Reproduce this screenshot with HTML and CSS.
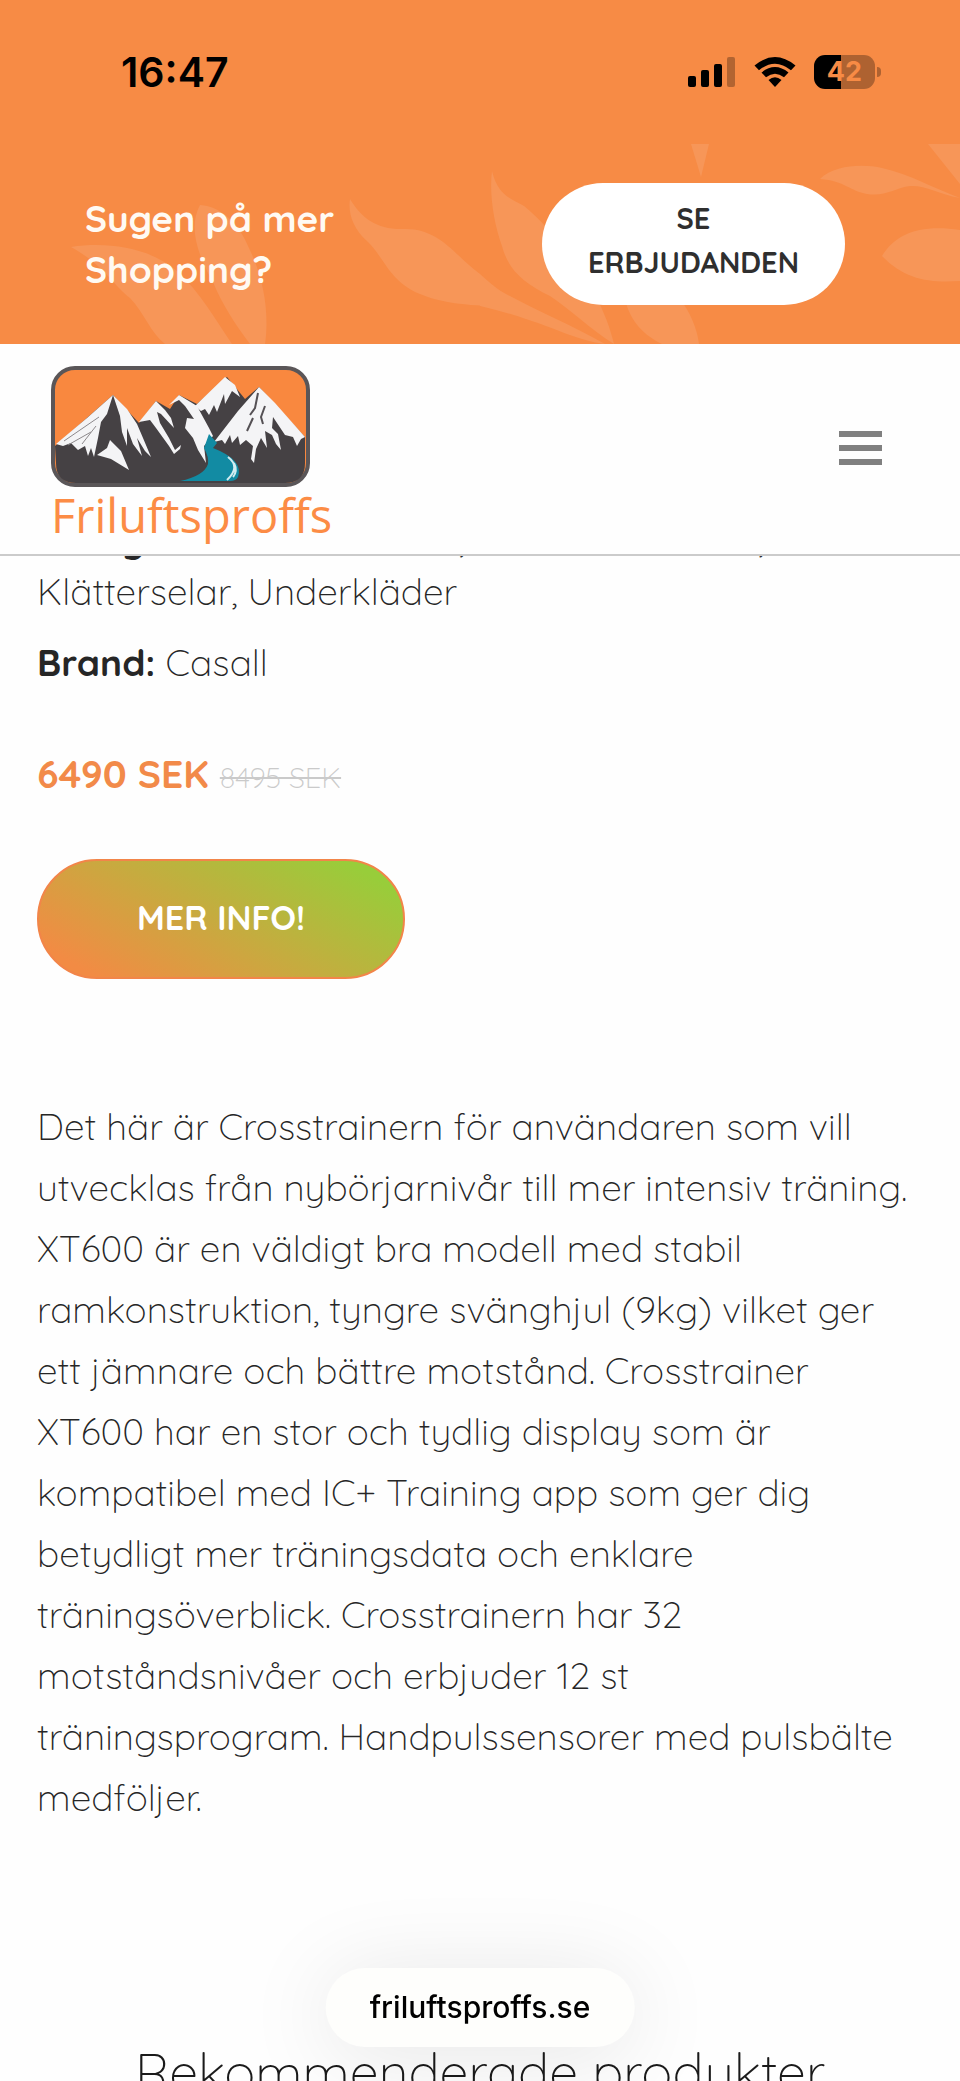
FILE: index.html
```html
<!DOCTYPE html>
<html lang="sv">
<head>
<meta charset="utf-8">
<meta name="viewport" content="width=device-width, initial-scale=1">
<title>Friluftsproffs</title>
<link rel="stylesheet" href="styles.css">
</head>
<body>
<div class="screen">
  <header class="top">
    <div class="status">
      <span class="clock">16:47</span>
      <div class="indicators">
        <svg class="signal" width="48" height="32" viewBox="0 0 48 32" aria-hidden="true">
          <rect x="0" y="20" width="8" height="11" rx="2"/>
          <rect x="13" y="14" width="8" height="17" rx="2"/>
          <rect x="26" y="8" width="8" height="23" rx="2"/>
          <rect x="39" y="1" width="8" height="30" rx="2" opacity=".28"/>
        </svg>
        <svg class="wifi" width="42" height="32" viewBox="0 0 42 32" aria-hidden="true">
          <path d="M0.500 9.500Q21 -7.500 41.500 9.500L37 14.300Q21 1 5 14.300Z"/>
          <path d="M7.500 16.500Q21 5.500 34.500 16.500L30 21.300Q21 14 12 21.300Z"/>
          <path d="M14.500 24Q21 18.500 27.500 24L21 31Z"/>
        </svg>
        <div class="battery"><span class="level">42</span></div>
      </div>
    </div>
    <div class="promo">
      <svg class="leaves" viewBox="0 0 960 200" preserveAspectRatio="none" aria-hidden="true">
        <path d="M71 103C110 97 152 105 177 127C200 148 215 175 232 200H165C150 188 145 170 130 154C112 140 105 122 71 103Z"/>
        <path d="M200 61C222 62 240 82 248 102C262 130 270 165 265 200H250C235 180 222 160 213 138C200 115 187 85 200 61Z"/>
        <path d="M350 55C362 75 378 86 404 85C440 84 455 112 480 130C500 148 515 158 530 166C500 160 455 165 420 150C390 138 385 115 368 98C352 84 348 68 350 55Z"/>
        <path d="M492 27C498 52 512 55 524 62C552 85 600 140 614 200C590 185 570 165 550 152C522 138 508 125 502 102C494 80 489 50 492 27Z"/>
        <path d="M480 135C520 160 560 175 605 200C570 196 548 178 480 162Z"/>
        <path d="M625 155H680C690 168 697 184 699 200H662C645 192 630 178 625 155Z"/>
        <path d="M691 0H709L701 33Z"/>
        <path d="M820 35C835 20 865 20 882 24C910 30 935 45 960 54C938 50 925 41 910 42C895 44 885 53 867 50C850 47 845 37 820 35Z"/>
        <path d="M928 0H960V40Z"/>
        <path d="M882 112C895 90 920 80 960 86V137C930 139 905 136 882 112Z"/>
      </svg>
      <p class="promo-text">Sugen på mer<br>Shopping?</p>
      <a class="promo-link" href="#">SE<br>ERBJUDANDEN</a>
    </div>
    <nav class="navbar">
      <a class="logo" href="#">
        <svg width="259" height="121" viewBox="0 0 259 121" aria-hidden="true">
          <rect x="2" y="2" width="255" height="117" rx="22" fill="#f9883f" stroke="#5a5658" stroke-width="4"/>
          <path d="M4 80L62 29L88 57L105 35L119 43L128 29L146 38L176 11L194 33L208 21L254 71V97Q254 117 234 117H25Q5 117 5 97Z" fill="#454144"/>
          <path d="M5 78L36 52L62 29L56 48L50 56L47 72L43 91L40 82L37 90L34 80L27 84L20 77L12 80Z" fill="#f4f4f6"/>
          <path d="M62 29L76 43L86 58L92 72L100 91L94 85L86 72L91 90L82 78L76 62L76 80L71 66L69 50Z" fill="#f4f4f6"/>
          <path d="M59 74L70 85L78 104L60 93L46 89L56 82Z" fill="#f4f4f6"/>
          <path d="M88 56L105 35L114 44L120 52L123 62L110 48L106 46L109 57L118 72L124 84L130 79L129 83L123 88L118 80L105 62L99 54Z" fill="#f4f4f6"/>
          <path d="M118 39L128 29L146 40L158 62L162 70L153 80L155 97L147 84L142 72L134 62L136 52L143 53L134 40L128 34Z" fill="#f4f4f6"/>
          <path d="M144 40L174 11L184 19L189 31L181 25L174 38L173 28L166 46L163 39L158 49L154 43L150 45Z" fill="#f4f4f6"/>
          <path d="M163 76L187 45L208 21L224 37L254 71L250 73L246 80L242 71L234 69L222 51L221 62L227 68L230 84L225 78L221 69L214 65L216 82L210 72L205 83L203 97L200 93L202 80L195 74L189 79L187 70L181 77L179 69L174 78L171 74Z" fill="#f4f4f6"/>
          <path d="M207 27L204 42L199 49M214 40L210 51L212 58M202 52L196 65" fill="none" stroke="#555155" stroke-width="2"/>
          <path d="M13 75L48 51M17 79L40 66M31 78L45 60" fill="none" stroke="#8d898c" stroke-width="1"/>
          <path d="M158 68L166 77L162 82Q193 94 187 111Q185 115 179 115H129Q153 110 157 98Q158 91 153 82Z" fill="#128ba3"/>
          <path d="M177 91Q190 101 176 114M183 97Q187 105 182 111" fill="none" stroke="#d3edf1" stroke-width="2"/>
        </svg>
        <span class="logo-name">Friluftsproffs</span>
      </a>
      <button class="menu" type="button" aria-label="Meny"><span></span><span></span><span></span></button>
    </nav>
  </header>

  <main class="product">
    <p class="meta"><strong>Kategori:</strong> Crosstrainerna, Konditionskläder,<br>Klätterselar, Underkläder</p>
    <p class="meta"><strong>Brand:</strong> Casall</p>
    <p class="price">6490 SEK <del>8495 SEK</del></p>
    <a class="more" href="#">MER INFO!</a>
    <p class="description">Det här är Crosstrainern för användaren som vill utvecklas från nybörjarnivår till mer intensiv träning. XT600 är en väldigt bra modell med stabil ramkonstruktion, tyngre svänghjul (9kg) vilket ger ett jämnare och bättre motstånd. Crosstrainer XT600 har en stor och tydlig display som är kompatibel med IC+ Training app som ger dig betydligt mer träningsdata och enklare träningsöverblick. Crosstrainern har 32 motståndsnivåer och erbjuder 12 st träningsprogram. Handpulssensorer med pulsbälte medföljer.</p>
    <h2 class="related">Rekommenderade produkter</h2>
  </main>

  <div class="address">friluftsproffs.se</div>
</div>
</body>
</html>
```
FILE: styles.css
```css
* { box-sizing: border-box; }

body {
  margin: 0;
  background: #fefefe;
  color: #262626;
  font-family: Quicksand, Lato, sans-serif;
  font-size: 37px;
  line-height: 61px;
}

p, h2 { margin: 0; }
a { text-decoration: none; }

.screen {
  position: relative;
  height: 100vh;
  overflow: hidden;
}

/* Header */
.top {
  position: sticky;
  top: 0;
  z-index: 2;
  background: #f78b45;
}

.status {
  display: flex;
  justify-content: space-between;
  align-items: center;
  height: 144px;
  padding: 0 78px 0 121px;
  color: #000;
}

.clock {
  font: 600 41px/48px Inter, sans-serif;
}

.indicators {
  display: flex;
  align-items: center;
  gap: 18px;
}

.battery {
  position: relative;
  width: 61px;
  height: 34px;
  margin-right: 7px;
  border-radius: 11px;
  background: linear-gradient(to right, #000 27px, #ae6231 27px);
  color: #f78b45;
  text-align: center;
  font: 700 27px/34px Inter, sans-serif;
}

.battery::after {
  content: "";
  position: absolute;
  top: 12px;
  right: -6px;
  width: 4px;
  height: 10px;
  border-radius: 0 4px 4px 0;
  background: #ae6231;
}

.promo {
  position: relative;
  display: flex;
  justify-content: space-between;
  align-items: center;
  height: 200px;
  padding: 0 115px 0 85px;
}

.leaves {
  position: absolute;
  inset: 0;
  width: 100%;
  height: 100%;
  fill: #f79658;
}

.promo-text {
  position: relative;
  color: #fffaf3;
  font-size: 37px;
  font-weight: 700;
  line-height: 51px;
}

.promo-link {
  position: relative;
  padding: 13px 46px 21px;
  border-radius: 61px;
  background: #fff;
  color: #2f2f2f;
  font-size: 29px;
  font-weight: 700;
  line-height: 44px;
  text-align: center;
}

.navbar {
  display: flex;
  justify-content: space-between;
  align-items: center;
  padding: 22px 78px 16px 51px;
  border-bottom: 2px solid #cbcbcb;
  background: #fefefe;
}

.logo {
  display: flex;
  flex-direction: column;
  gap: 5px;
  color: #fc8c45;
}

.logo-name {
  font: 400 47px/46px "Open Sans", sans-serif;
}

.menu {
  display: flex;
  flex-direction: column;
  gap: 8px;
  margin-bottom: 8px;
  padding: 0;
  border: 0;
  background: none;
}

.menu span {
  width: 43px;
  height: 6px;
  background: #808080;
}

/* Product */
.product {
  margin-top: -43px;
  padding: 0 37px;
  font-weight: 300;
}

.meta {
  margin-bottom: 19px;
  line-height: 52px;
}

.meta strong { font-weight: 700; }

.price {
  margin-top: 61px;
  color: #f28a49;
  font-size: 39px;
  font-weight: 700;
  line-height: 49px;
}

.price del {
  color: #cacaca;
  font-size: 29px;
  font-weight: 300;
}

.more {
  display: block;
  width: fit-content;
  margin-top: 57px;
  padding: 27px 98px 29px;
  border: 2px solid #f28549;
  border-radius: 60px;
  background: linear-gradient(30deg, #f28b44 10%, #98cd3a 90%);
  color: #fff;
  font-size: 34px;
  font-weight: 700;
  line-height: 60px;
}

.description { margin-top: 117px; }

.related {
  margin: 211px -37px 0;
  color: #1a1a1a;
  font-size: 52px;
  font-weight: 300;
  line-height: 65px;
  text-align: center;
}

/* Browser address pill */
.address {
  position: absolute;
  bottom: 34px;
  left: 50%;
  z-index: 3;
  padding: 0 44px;
  border-radius: 40px;
  background: #fefefc;
  box-shadow: 0 8px 90px rgba(0, 0, 0, .1);
  color: #000;
  font: 500 30px/79px Inter, sans-serif;
  transform: translateX(-50%);
}
```
